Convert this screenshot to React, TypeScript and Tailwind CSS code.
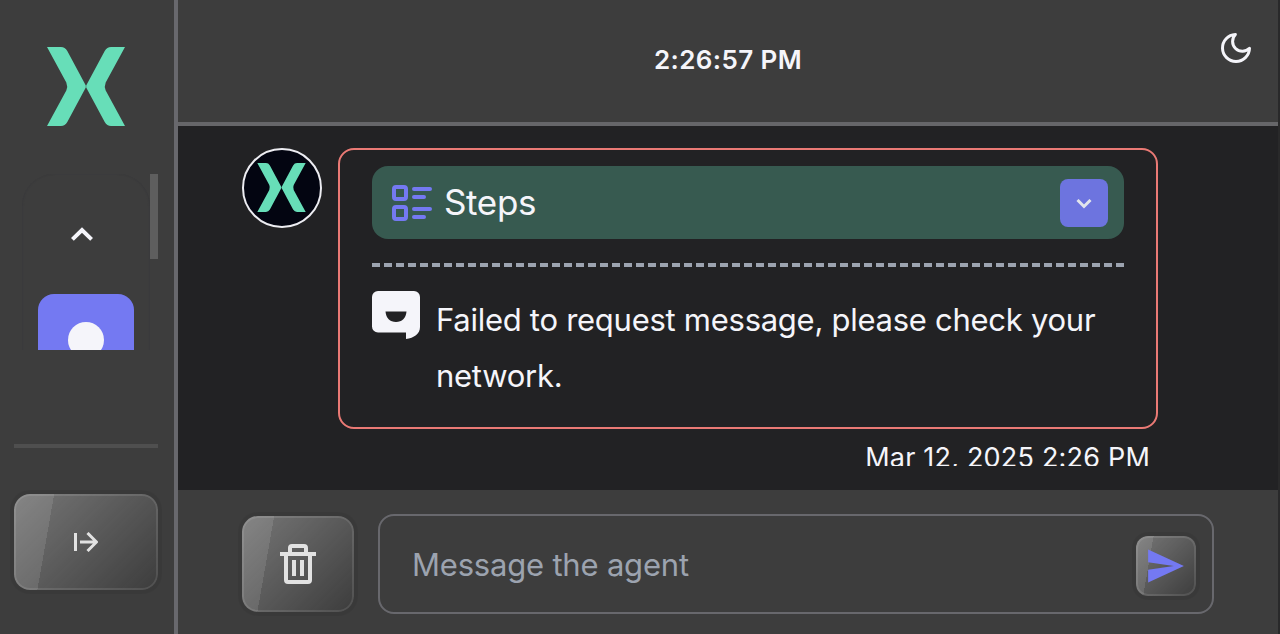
import type { ReactNode } from "react";
import { BiTrash } from "react-icons/bi";
import { IoMdSend } from "react-icons/io";

function Logo({ className }: { className: string }) {
  return (
    <svg viewBox="0 0 78 79" className={className} fill="#67deb8">
      <path d="M0 0H14Q18 0 20.3 4L38.8 38.5V40.5L20.3 75Q18 79 14 79H0L19.3 43.5Q21 39.5 19.3 35.5Z" />
      <path d="M78 0H64Q60 0 57.7 4L39.2 38.5V40.5L57.7 75Q60 79 64 79H78L58.7 43.5Q57 39.5 58.7 35.5Z" />
    </svg>
  );
}

function GlassButton({ className, label, children }: { className: string; label: string; children: ReactNode }) {
  return (
    <button
      aria-label={label}
      className={
        "flex shrink-0 items-center justify-center bg-[linear-gradient(135deg,rgba(255,255,255,0.3),transparent),linear-gradient(100deg,rgba(255,255,255,0.1)_25%,transparent_25%)] shadow-[inset_0_0_0_2px_rgba(255,255,255,0.1),0_0_0_4px_rgba(0,0,0,0.05)] " +
        className
      }
    >
      {children}
    </button>
  );
}

function Sidebar() {
  return (
    <aside className="flex w-[178px] shrink-0 flex-col border-r-4 border-[#68686d] bg-[#3d3d3d] pr-4 pl-3.5">
      <Logo className="mt-[46.5px] ml-[33px] h-[79px] w-[78px] shrink-0" />
      <div className="mt-[48.5px] flex h-[176px] shrink-0 justify-between overflow-hidden">
        <div className="ml-2 h-[260px] w-32 shrink-0 rounded-[32px] shadow-[inset_1px_0_1px_#3a3a3c,inset_-1px_0_1px_#3a3a3c]">
          <div className="flex h-[120px] items-center justify-center pr-2">
            <svg viewBox="0 0 24 16" className="h-4 w-6" fill="none" stroke="#f5f5fa" strokeWidth="4">
              <path d="M2.400 13.400L12 4l9.600 9.400" />
            </svg>
          </div>
          <div className="ml-4 flex h-24 w-24 justify-center rounded-2xl bg-[#7479f2] pt-7">
            <div className="h-9 w-9 rounded-full bg-[#f5f5fa]" />
          </div>
        </div>
        <div className="h-[85px] w-2 bg-[#5e5e5e]" />
      </div>
      <div className="mt-[94px] h-1 w-36 shrink-0 bg-[#4f4f4f]" />
      <GlassButton label="Expand" className="mt-[46px] h-24 w-36 rounded-2xl">
        <svg viewBox="0 0 24 20" className="h-5 w-6" fill="none" stroke="#e2e2e2" strokeWidth="3">
          <path d="M1.500 1v18M6 10h17M13.500 1l9 9-9 9" />
        </svg>
      </GlassButton>
    </aside>
  );
}

function MoonIcon() {
  return (
    <svg
      viewBox="0 0 24 24"
      className="mt-[30px] mr-6 h-9 w-9"
      fill="none"
      stroke="currentColor"
      strokeWidth="2"
      strokeLinejoin="round"
    >
      <path d="M11.600 3a6.200 6.200 0 0 0 9.400 9.200A9 9 0 1 1 11.600 3Z" />
    </svg>
  );
}

function StepsIcon() {
  return (
    <svg viewBox="0 0 40 36" className="h-9 w-10" fill="none" stroke="#7479f2" strokeWidth="4" strokeLinecap="round">
      <rect x="2" y="2" width="12" height="12" rx="2" />
      <rect x="2" y="22" width="12" height="12" rx="2" />
      <path d="M22 4h16M22 12h10M22 24h16M22 32h10" />
    </svg>
  );
}

function Message() {
  return (
    <div className="flex">
      <div className="flex h-20 w-20 shrink-0 items-center justify-center rounded-full border-2 border-[#ededf2] bg-[#030511] pr-px pb-px">
        <Logo className="h-[49px] w-[49px]" />
      </div>
      <div className="ml-4 w-[820px]">
        <div className="h-[281px] rounded-2xl border-2 border-[#ea7a75] px-8 pt-4">
          <div className="flex h-[73px] items-center rounded-2xl bg-[#375a50] pr-4 pl-5">
            <StepsIcon />
            <span className="ml-3 text-[35px] leading-none tracking-[-0.35px]">Steps</span>
            <button aria-label="Show steps" className="ml-auto flex h-12 w-12 items-center justify-center rounded-lg bg-[#6d74df]">
              <svg viewBox="0 0 16 10" className="mt-0.5 h-[10px] w-4" fill="none" stroke="#e2e5ec" strokeWidth="3">
                <path d="M1.500 1l6.500 6.500L14.500 1" />
              </svg>
            </button>
          </div>
          <div className="mt-6 h-1 bg-[repeating-linear-gradient(90deg,#9ca3af_0_8px,transparent_8px_12px)]" />
          <div className="mt-6 flex">
            <svg viewBox="0 0 48 48" className="h-12 w-12 shrink-0">
              <path fill="#f5f5fa" fillRule="evenodd" d="M6 0h36a6 6 0 0 1 6 6v30c0 7-6 11-14 12v-6.500H6a6 6 0 0 1-6-6V6a6 6 0 0 1 6-6ZM13.500 20.500C14 27 18 31 24 31s10-4 10.500-10.500Z" />
            </svg>
            <p className="mt-px ml-4 text-[31px] leading-14 tracking-[-0.27px]">
              Failed to request message, please check your
              <br />
              network.
            </p>
          </div>
        </div>
        <div className="h-[37px] overflow-hidden pt-[9px] pr-2 text-right text-[27px] leading-10 tracking-[0.2px]">
          Mar 12, 2025 2:26 PM
        </div>
      </div>
    </div>
  );
}

export default function App() {
  return (
    <div className="flex h-[634px] w-[1280px] overflow-hidden bg-[#29292a] font-[Inter,sans-serif] text-[#f5f5fa]">
      <Sidebar />
      <div className="flex w-[1100px] flex-col">
        <header className="flex h-[126px] shrink-0 items-start border-b-4 border-[#666669] bg-[#3d3d3d]">
          <time className="mt-10 ml-[60px] flex-1 text-center text-[26px] leading-10 font-semibold tracking-[0.4px]">
            2:26:57 PM
          </time>
          <MoonIcon />
        </header>
        <main className="h-[364px] shrink-0 bg-[#222224] pt-[22px] pl-16">
          <Message />
        </main>
        <footer className="flex flex-1 items-start bg-[#3d3d3d] pl-16">
          <GlassButton label="Clear chat" className="mt-[26px] h-24 w-28 rounded-2xl">
            <BiTrash className="h-12 w-12 text-[#e2e2e2]" />
          </GlassButton>
          <div className="mt-6 ml-6 flex h-[100px] w-[836px] items-center rounded-2xl border-2 border-[#68686d] pr-4 pl-8">
            <span className="flex-1 pt-[3px] text-[31px] tracking-[-0.2px] text-[#9ca3af]">Message the agent</span>
            <GlassButton label="Send" className="mt-1 h-[60px] w-[60px] rounded-xl">
              <IoMdSend className="h-[44px] w-[44px] text-[#7479f2]" />
            </GlassButton>
          </div>
        </footer>
      </div>
    </div>
  );
}
